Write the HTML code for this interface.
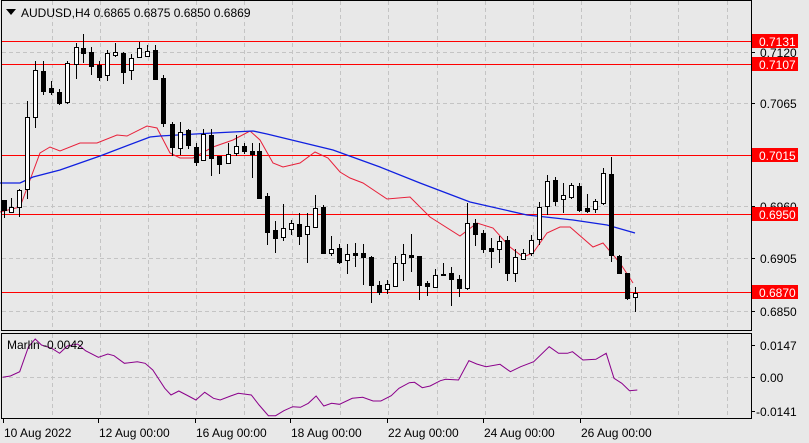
<!DOCTYPE html>
<html><head><meta charset="utf-8"><style>
html,body{margin:0;padding:0;background:#e8e8e8;width:809px;height:443px;overflow:hidden;font-family:"Liberation Sans",sans-serif}
svg text{font-family:"Liberation Sans",sans-serif;font-size:12px;fill:#000}
</style></head><body>
<svg id="s" width="809" height="443" xmlns="http://www.w3.org/2000/svg">
<rect x="0" y="0" width="809" height="443" fill="#e8e8e8"/>
<g id="grid" stroke="#c4c4c4" stroke-dasharray="4,3" stroke-width="1"></g>
<line x1="2" y1="41.5" x2="751" y2="41.5" stroke="#f00"/>
<line x1="2" y1="64.5" x2="751" y2="64.5" stroke="#f00"/>
<line x1="2" y1="155.5" x2="751" y2="155.5" stroke="#f00"/>
<line x1="2" y1="214.5" x2="751" y2="214.5" stroke="#f00"/>
<line x1="2" y1="292.5" x2="751" y2="292.5" stroke="#f00"/>
<polyline id="red" fill="none" stroke="#e8203a" stroke-width="1"/>
<polyline id="blue" fill="none" stroke="#1020e0" stroke-width="1.3"/>
<g id="c" stroke="#000" stroke-width="1"></g>
<polyline id="ind" fill="none" stroke="#8b008b" stroke-width="1"/>
<rect x="1.5" y="0.5" width="750" height="330" fill="none" stroke="#000"/>
<rect x="1.5" y="333.5" width="750" height="85" fill="none" stroke="#000"/>
<polygon points="6,9 16,9 11,15" fill="#000"/>
<text x="21" y="17">AUDUSD,H4  0.6865 0.6875 0.6850 0.6869</text>
<g id="ax"></g>
<text x="7" y="349" font-size="11">Marlin -0.0042</text>
</svg>
<script>
var NS="http://www.w3.org/2000/svg",s=document.getElementById('s');
function el(p,t,a,txt){var e=document.createElementNS(NS,t);for(var k in a)e.setAttribute(k,a[k]);if(txt)e.textContent=txt;p.appendChild(e);return e;}
var g=document.getElementById('grid');
[52,100,148,196,244,292,340,388,437,485,533,581,630,678,727].forEach(function(x){el(g,'line',{x1:x+.5,y1:1,x2:x+.5,y2:330});el(g,'line',{x1:x+.5,y1:334,x2:x+.5,y2:418});});
[52,103,155,206,258,311].forEach(function(y){el(g,'line',{x1:2,y1:y+.5,x2:751,y2:y+.5});});
el(g,'line',{x1:2,y1:377.5,x2:751,y2:377.5});
var D=[[4,200,218,200,210,0],[11,198,212,207,212,1],[19,189,217,190,207,1],[27,101,199,117,189,1],[35,61,128,70,117,1],[43,61,95,71,91,0],[51,81,95,88,92,0],[59,89,105,92,103,0],[67,61,104,63,102,1],[76,43,79,47,64,1],[83,34,63,48,53,0],[91,47,75,52,66,0],[99,61,81,65,77,0],[107,50,81,53,75,1],[115,43,57,52,55,1],[123,52,84,53,72,0],[131,54,80,58,70,1],[139,42,58,48,57,1],[147,45,57,51,56,1],[155,45,79,50,79,0],[163,75,127,78,123,0],[172,122,156,124,147,0],[180,122,155,132,148,1],[188,129,149,130,145,0],[196,143,166,147,162,0],[203,129,160,134,160,1],[211,129,176,135,158,0],[219,156,174,156,164,0],[228,143,163,154,163,1],[236,135,156,146,153,1],[244,143,154,146,151,0],[252,143,178,151,154,0],[259,143,199,151,198,0],[267,193,245,196,232,0],[275,221,253,230,238,0],[283,204,241,228,237,1],[291,220,235,223,229,1],[299,213,245,224,236,0],[307,213,263,226,234,1],[315,195,227,208,227,1],[323,205,253,207,253,0],[331,236,256,249,253,1],[339,244,264,248,262,0],[347,244,274,254,260,1],[355,243,267,253,255,0],[363,244,285,253,257,0],[371,256,303,257,285,0],[379,281,295,285,292,0],[387,280,294,284,289,1],[395,256,286,263,286,1],[403,244,281,254,263,1],[411,234,272,255,257,0],[419,256,300,256,285,0],[427,281,296,283,286,0],[435,269,288,275,287,1],[443,263,276,274,275,0],[451,267,306,273,279,0],[459,275,297,279,288,0],[467,203,290,223,288,1],[475,219,246,223,234,0],[483,230,253,233,249,0],[491,238,268,248,251,0],[499,236,263,241,249,1],[507,236,281,240,273,0],[515,249,282,257,273,1],[523,249,260,253,259,1],[531,235,256,240,253,1],[539,202,245,207,239,1],[547,175,215,181,206,1],[555,177,206,180,201,0],[563,183,213,195,199,1],[571,183,199,185,197,1],[579,183,212,186,210,0],[587,194,213,208,211,0],[595,199,213,201,209,1],[603,168,205,173,203,1],[611,157,262,174,255,0],[619,255,273,256,273,0],[627,273,300,273,298,0],[635,287,312,293,297,1]];
var c=document.getElementById('c');
D.forEach(function(d){el(c,'line',{x1:d[0]+.5,y1:d[1],x2:d[0]+.5,y2:d[2]});var h=Math.max(d[4]-d[3],1);el(c,'rect',{x:d[0]-1.5,y:d[3]+.5,width:4,height:h,fill:d[5]?'#fff':'#000'});});
document.getElementById('red').setAttribute('points',"0,212 20,207 30,180 40,153 50,147 60,151 80,143 97,143 117,135 127,136 147,126 157,128 170,153 180,158 193,158 213,147 233,140 250,131 260,140 273,163 283,167 300,163 315,152 328,158 340,172 350,178 363,183 387,199 410,197 430,217 460,236 477,223 493,228 510,247 523,257 533,253 547,233 560,227 570,227 593,247 603,243 620,263 633,283");
document.getElementById('blue').setAttribute('points',"0,183 20,183 33,177 60,170 100,156 150,137 160,136 213,133 253,131 267,134 333,150 380,167 420,183 470,202 527,215 573,220 607,225 635,233");
var ip=[[5,172],[20,168],[38,155],[55,80],[68,57],[80,75],[100,85],[115,100],[130,78],[150,72],[165,92],[190,112],[208,102],[220,107],[240,130],[265,125],[280,130],[295,150],[318,205],[330,225],[345,213],[360,225],[378,240],[395,217],[412,235],[425,240],[445,228],[460,220],[485,225],[500,255],[518,287],[532,287],[548,272],[565,260],[580,262],[595,250],[610,228],[625,258],[640,250],[655,253],[680,235],[700,232],[720,243],[735,243],[755,227],[770,205],[790,188],[800,187],[815,203],[830,198],[850,182],[860,178],[885,180],[905,122],[920,132],[938,140],[965,133],[985,155],[1005,140],[1030,125],[1060,80],[1078,100],[1095,100],[1105,95],[1125,120],[1150,118],[1170,100],[1185,175],[1200,190],[1215,212],[1230,210]];
document.getElementById('ind').setAttribute('points',ip.map(function(p){return (p[0]/1.93).toFixed(1)+","+(320+p[1]/3).toFixed(1);}).join(" "));
var ax=document.getElementById('ax');
[[52,"0.7120"],[103,"0.7065"],[206,"0.6960"],[258,"0.6905"],[311,"0.6850"],[345,"0.0147"],[377,"0.00"],[411,"-0.0141"]].forEach(function(a){el(ax,'line',{x1:751,y1:a[0]+.5,x2:755,y2:a[0]+.5,stroke:'#000'});el(ax,'text',{x:a[1][0]=='-'?756:760,y:a[0]+5},a[1]);});
[[41,"0.7131"],[64,"0.7107"],[155,"0.7015"],[214,"0.6950"],[292,"0.6870"]].forEach(function(a){el(ax,'rect',{x:752,y:a[0]-7,width:46,height:14,fill:'#f00'});el(ax,'text',{x:759,y:a[0]+5,style:'fill:#fff'},a[1]);});
[[3,"10 Aug 2022"],[98,"12 Aug 00:00"],[195,"16 Aug 00:00"],[290,"18 Aug 00:00"],[387,"22 Aug 00:00"],[483,"24 Aug 00:00"],[580,"26 Aug 00:00"]].forEach(function(a){el(ax,'line',{x1:a[0]+.5,y1:419,x2:a[0]+.5,y2:423,stroke:'#000'});el(ax,'text',{x:a[0]+1,y:437},a[1]);});
</script>
</body></html>
